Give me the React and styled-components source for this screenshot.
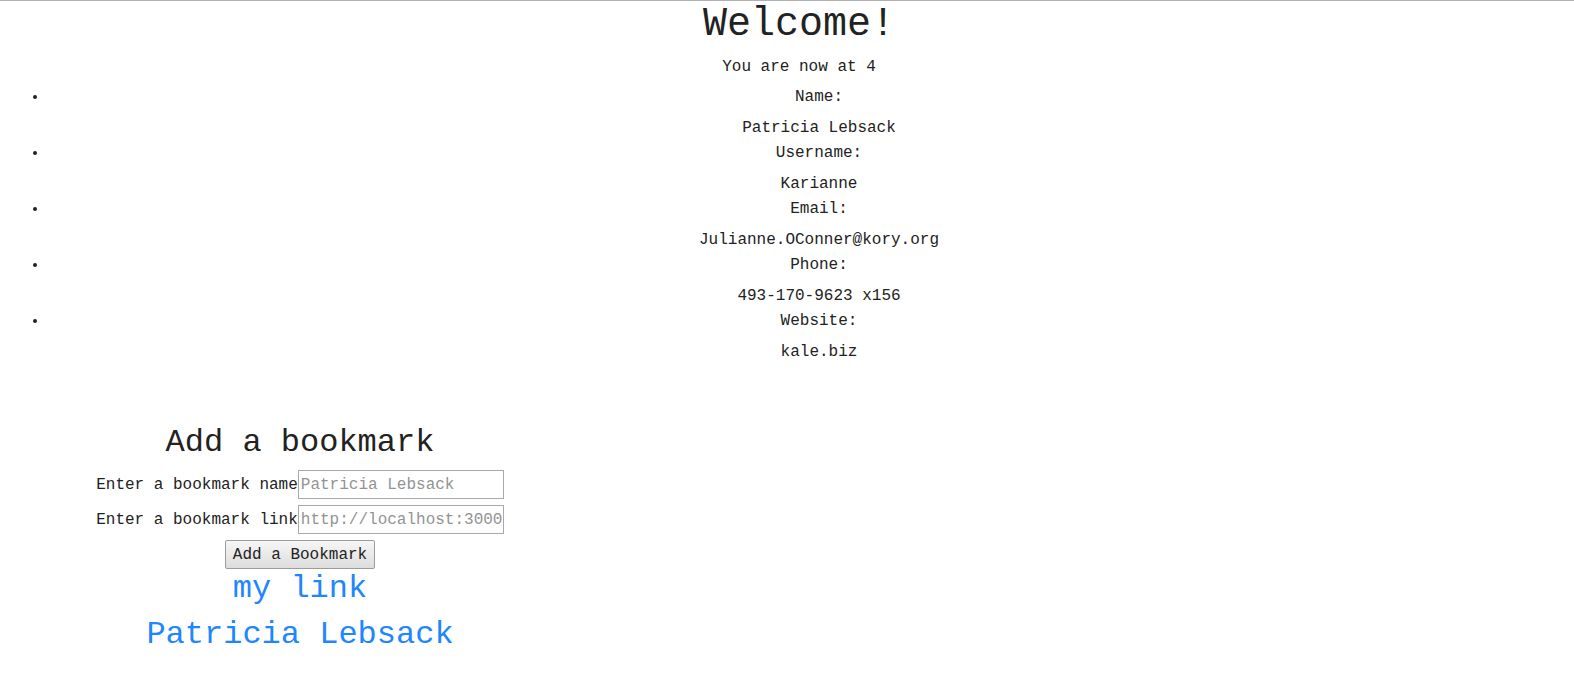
/* Basic */
import React from "react";
/* Styles */
import styled, { createGlobalStyle } from "styled-components";

const GlobalStyle = createGlobalStyle`
    html, body {
        margin: 0;
        padding: 0;
        background: #fff;
        overflow-x: hidden;
    }
    body {
        font-family: "Liberation Mono", "Courier New", monospace;
        color: #222;
    }
`;

const TopLine = styled.div`
    height: 1px;
    background: #b0b0b0;
`;
const Page = styled.div`
    margin-left: 8px;
    width: 1582px;
`;
const Header = styled.header`
    text-align: center;
`;
const Title = styled.h1`
    margin: 1px 0 0;
    font-size: 40px;
    line-height: 45px;
    font-weight: normal;
`;
const Subtitle = styled.p`
    margin: 11px 0 0;
    font-size: 16px;
    line-height: 18px;
`;
const InfoList = styled.ul`
    margin: 12px 0 0;
    padding-left: 40px;
    list-style: disc outside;
    font-size: 16px;
    line-height: 18px;
`;
const InfoItem = styled.li`
    text-align: center;
    padding-bottom: 7px;
`;
const Label = styled.div``;
const Value = styled.div`
    margin-top: 13px;
`;
const Bookmarks = styled.section`
    width: 584px;
    margin-top: 57px;
    display: flex;
    flex-direction: column;
    align-items: center;
`;
const Heading = styled.h2`
    margin: 0;
    font-size: 32px;
    line-height: 36px;
    font-weight: normal;
`;
const Form = styled.form`
    margin-top: 9px;
    display: flex;
    flex-direction: column;
    align-items: center;
    gap: 6px;
`;
const Row = styled.label`
    display: flex;
    align-items: center;
    font-size: 16px;
    line-height: 18px;
`;
const Input = styled.input`
    box-sizing: border-box;
    width: 206px;
    height: 29px;
    margin: 0;
    padding: 0 1px 0 2px;
    border: 1px solid #a9a9a9;
    font-family: "Liberation Mono", "Courier New", monospace;
    font-size: 16px;
    color: #222;
    outline: none;
    &::placeholder {
        color: #939393;
    }
`;
const Button = styled.button`
    box-sizing: border-box;
    height: 29px;
    padding: 0 7px;
    border: 1px solid #9c9c9c;
    border-radius: 2px;
    background: linear-gradient(#f6f6f6, #dddddd);
    font-family: "Liberation Mono", "Courier New", monospace;
    font-size: 16px;
    color: #222;
`;
const Links = styled.div`
    margin-top: 2px;
    display: flex;
    flex-direction: column;
    align-items: center;
    gap: 10px;
`;
const BookmarkLink = styled.a`
    font-size: 32px;
    line-height: 36px;
    color: #1e86ff;
    text-decoration: none;
`;

const user = [
    ["Name:", "Patricia Lebsack"],
    ["Username:", "Karianne"],
    ["Email:", "Julianne.OConner@kory.org"],
    ["Phone:", "493-170-9623 x156"],
    ["Website:", "kale.biz"],
];

const bookmarks = [
    { name: "my link", url: "#" },
    { name: "Patricia Lebsack", url: "#" },
];

const App = () => {
    return (
        <>
            <GlobalStyle />
            <TopLine />
            <Page>
                <Header>
                    <Title>Welcome!</Title>
                    <Subtitle>You are now at 4</Subtitle>
                </Header>
                <InfoList>
                    {user.map(([label, value]) => (
                        <InfoItem key={label}>
                            <Label>{label}</Label>
                            <Value>{value}</Value>
                        </InfoItem>
                    ))}
                </InfoList>
                <Bookmarks>
                    <Heading>Add a bookmark</Heading>
                    <Form onSubmit={e => e.preventDefault()}>
                        <Row>
                            Enter a bookmark name
                            <Input placeholder="Patricia Lebsack" />
                        </Row>
                        <Row>
                            Enter a bookmark link
                            <Input placeholder="http://localhost:3000" />
                        </Row>
                        <Button type="submit">Add a Bookmark</Button>
                    </Form>
                    <Links>
                        {bookmarks.map(b => (
                            <BookmarkLink key={b.name} href={b.url}>
                                {b.name}
                            </BookmarkLink>
                        ))}
                    </Links>
                </Bookmarks>
            </Page>
        </>
    );
};

export default App;
